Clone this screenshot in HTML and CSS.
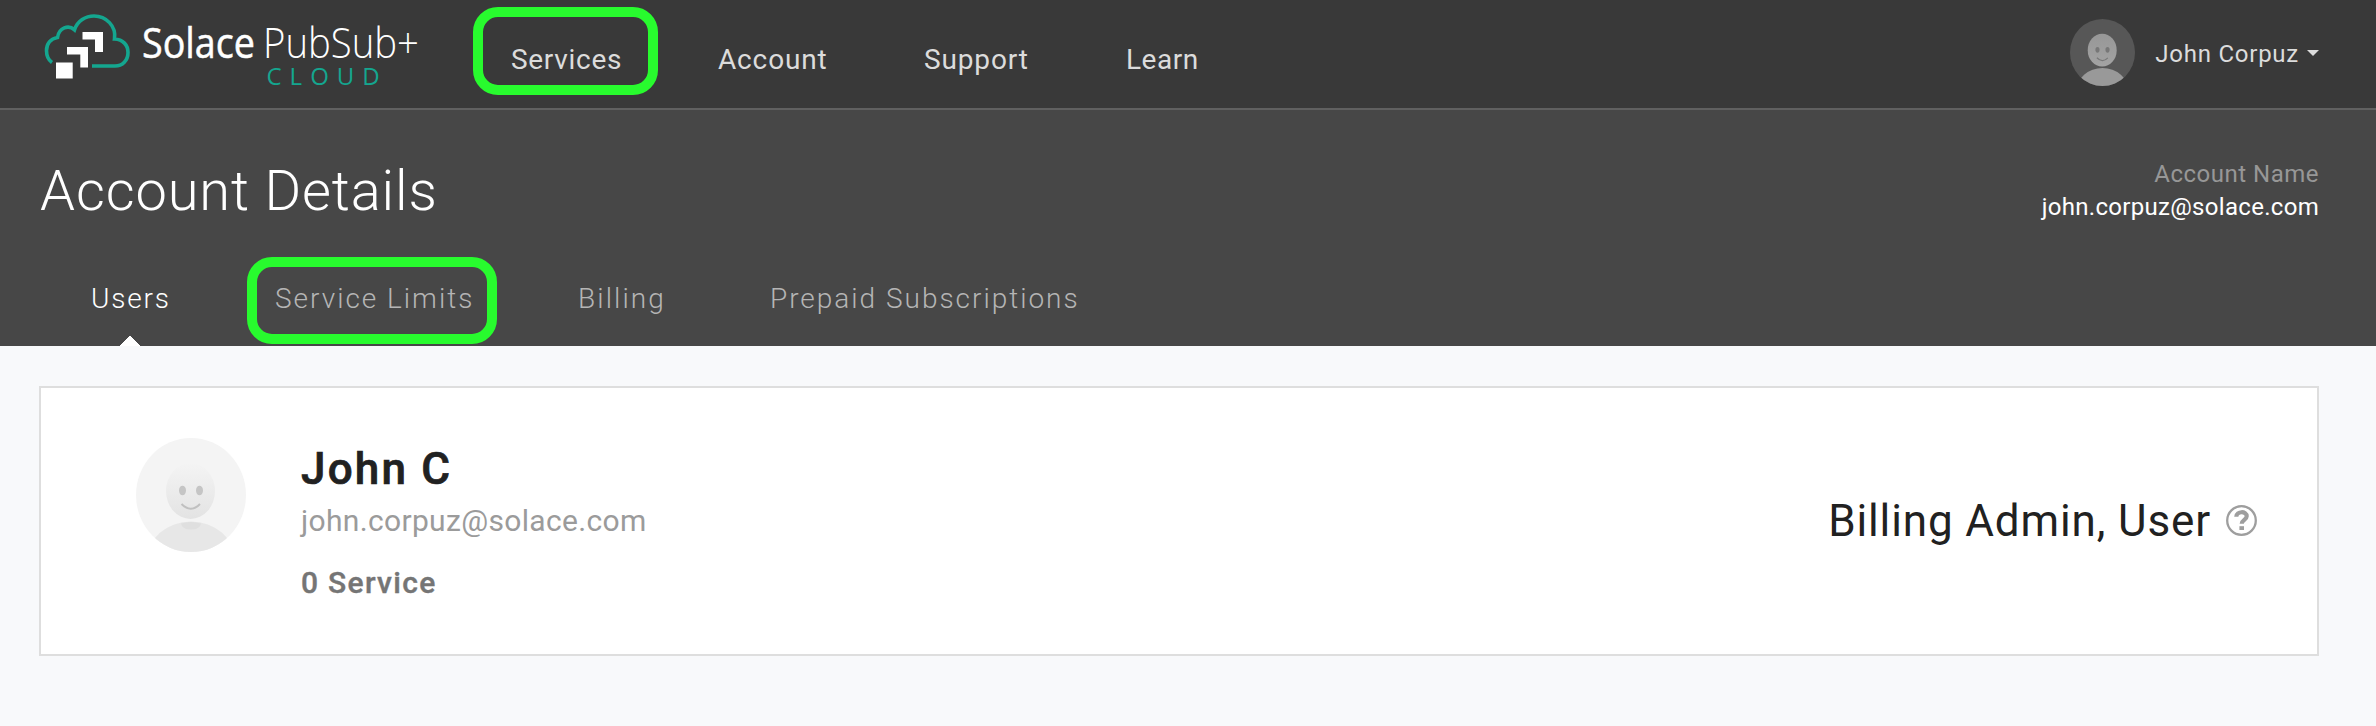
FILE: index.html
```html
<!DOCTYPE html>
<html lang="en">
<head>
<meta charset="utf-8">
<title>Account Details</title>
<link rel="stylesheet" href="styles.css">
</head>
<body>
<header class="topbar">
  <svg class="logo" width="400" height="108" viewBox="0 0 400 108">
    <path class="cloud" d="M22 62.5C17 59 16.500 54 16.500 50.500C16.500 44 20.500 38.500 27.500 37.500C29 27.500 38.500 24.500 44.500 29.800C47.500 21 55.500 16 64 16C76 16 86.500 26 84.500 39C93 39.500 98 45 98 52.500C98 60.500 92.500 66 85 66H62"/>
    <path class="blocks" d="M26 62.500H42.700V78.500H26ZM37 47H58V67.500H50.300V54.500H37ZM52.500 32H73V52H65V39.500H52.500Z"/>
    <text class="logo-solace" x="112" y="58" textLength="113" lengthAdjust="spacingAndGlyphs">Solace</text>
    <text class="logo-pubsub" x="233" y="58" textLength="156" lengthAdjust="spacingAndGlyphs">PubSub+</text>
    <text class="logo-cloud" x="236.500" y="84.500">CLOUD</text>
  </svg>
  <nav class="main-nav">
    <a class="nav-item marked">Services</a>
    <a class="nav-item account">Account</a>
    <a class="nav-item support">Support</a>
    <a class="nav-item learn">Learn</a>
  </nav>
  <div class="profile">
    <svg class="profile-avatar" viewBox="0 0 110 114" preserveAspectRatio="none">
      <defs>
        <clipPath id="disc"><ellipse cx="55" cy="57" rx="55" ry="57"/></clipPath>
        <linearGradient id="faceDark" x1="0" y1="0" x2="0" y2="1"><stop offset="0" stop-color="#979797"/><stop offset="1" stop-color="#a3a3a3"/></linearGradient>
        <linearGradient id="faceLight" x1="0" y1="0" x2="0" y2="1"><stop offset="0" stop-color="#f4f4f4"/><stop offset="1" stop-color="#e3e3e3"/></linearGradient>
      </defs>
      <ellipse cx="55" cy="57" rx="55" ry="57" fill="#575757"/>
      <ellipse cx="54.500" cy="53" rx="24.500" ry="28" fill="url(#faceDark)"/>
      <g clip-path="url(#disc)"><ellipse cx="55" cy="122" rx="44" ry="38.500" fill="#999"/></g>
      <ellipse cx="46.500" cy="52.500" rx="3.500" ry="4.800" fill="#777"/><ellipse cx="63.500" cy="52.500" rx="3.500" ry="4.800" fill="#777"/>
      <path d="M45.500 66Q55 75.500 64 66" fill="none" stroke="#777" stroke-width="2"/>
    </svg>
    <span class="profile-name">John Corpuz</span>
    <svg class="caret" width="12" height="6" viewBox="0 0 12 6"><path d="M0 0H12L6 6Z"/></svg>
  </div>
</header>
<section class="subheader">
  <div class="title-row">
    <h1>Account Details</h1>
    <div class="account-name">
      <div class="label">Account Name</div>
      <div class="value">john.corpuz@solace.com</div>
    </div>
  </div>
  <nav class="tabs">
    <a class="tab users">Users</a>
    <a class="tab limits">Service Limits</a>
    <a class="tab billing">Billing</a>
    <a class="tab prepaid">Prepaid Subscriptions</a>
  </nav>
</section>
<main>
  <article class="card">
    <svg class="avatar" width="110" height="114" viewBox="0 0 110 114">
      <ellipse cx="55" cy="57" rx="55" ry="57" fill="#f4f4f4"/>
      <ellipse cx="54.500" cy="53" rx="24.500" ry="28" fill="url(#faceLight)"/>
      <g clip-path="url(#disc)"><ellipse cx="55" cy="122" rx="44" ry="38.500" fill="#e7e7e7"/></g>
      <path d="M45 85.500Q55 82.500 65 85.500Q64 91.500 55 91.500Q46 91.500 45 85.500Z" fill="#dfdfdf"/>
      <ellipse cx="46.500" cy="52.500" rx="3.500" ry="4.800" fill="#c5c5c5"/><ellipse cx="63.500" cy="52.500" rx="3.500" ry="4.800" fill="#c5c5c5"/>
      <path d="M45.500 66Q55 75.500 64 66" fill="none" stroke="#c0c0c0" stroke-width="2"/>
    </svg>
    <div class="info">
      <div class="name">John C</div>
      <div class="email">john.corpuz@solace.com</div>
      <div class="services">0 Service</div>
    </div>
    <div class="role">Billing Admin, User
      <svg class="help" width="31" height="31" viewBox="0 0 31 31"><circle cx="15.500" cy="15.500" r="14.300"/><path class="hook" d="M10.300 11.700C10.500 5.800 20.700 5.800 20.700 11.300C20.700 14.800 15.700 15 15.700 18.800"/><path class="dot" d="M13.400 21.200H18V25H13.400Z"/></svg>
    </div>
  </article>
</main>
</body>
</html>
```
FILE: styles.css
```css
* { box-sizing: border-box; }
body {
  margin: 0;
  width: 2376px;
  height: 726px;
  overflow: hidden;
  background: #f8f9fb;
  font-family: Roboto, "Liberation Sans", sans-serif;
  white-space: nowrap;
}
.topbar {
  display: flex;
  height: 110px;
  padding: 0 57px 0 30px;
  background: #393939;
  border-bottom: 2px solid #606060;
  color: #dcdcdc;
}
.logo { flex: none; overflow: visible; }
.cloud { fill: none; stroke: #14a68f; stroke-width: 3.6; }
.blocks { fill: #fff; }
.logo text { font-family: "Open Sans", sans-serif; }
.logo-solace { font-size: 42px; font-weight: 400; fill: #fff; stroke: #fff; stroke-width: .5px; }
.logo-pubsub { font-size: 42px; font-weight: 300; fill: #fff; }
.logo-cloud { font-size: 24px; fill: #14a68f; letter-spacing: 8px; }
.main-nav { display: flex; font-size: 28px; line-height: 32px; letter-spacing: .85px; }
.nav-item { padding-top: 44px; }
.nav-item.marked {
  width: 185px;
  height: 88px;
  margin: 7px 0 0 43px;
  padding: 27px 0 0 28px;
  border: 10px solid #28fb2e;
  border-radius: 25px;
  letter-spacing: .7px;
}
.nav-item.account { margin-left: 60px; width: 206px; }
.nav-item.support { width: 202px; }
.nav-item.learn { letter-spacing: .5px; }
.profile { display: flex; margin-left: auto; }
.profile-avatar { width: 65px; height: 67px; margin: 19px 20px 0 0; }
.profile-name { font-size: 24px; line-height: 28px; margin-top: 40px; letter-spacing: .75px; }
.caret { margin: 50px 0 0 8px; fill: #dcdcdc; }
.subheader { height: 236px; background: #474747; color: #fff; }
.title-row { display: flex; justify-content: space-between; padding: 0 57px 0 40px; height: 147px; }
h1 { margin: 48px 0 0; font-size: 56px; font-weight: 300; line-height: 66px; letter-spacing: .88px; }
.account-name { padding-top: 48px; text-align: right; font-size: 24px; line-height: 33px; }
.label { color: #979797; letter-spacing: .5px; }
.value { letter-spacing: .3px; }
.tabs { display: flex; height: 89px; font-size: 28px; font-weight: 300; line-height: 32px; letter-spacing: 1.98px; color: #b5b5b5; }
.tab { padding-top: 26px; }
.users {
  width: 156px;
  margin-left: 91px;
  color: #fff;
  letter-spacing: 1.8px;
  background: conic-gradient(from 135deg at 50% 0, #fff 90deg, transparent 0) 29px 79px / 20px 10px no-repeat;
}
.limits {
  width: 250px;
  height: 87px;
  padding: 16px 0 0 18px;
  border: 10px solid #28fb2e;
  border-radius: 25px;
}
.billing { margin-left: 81px; width: 192px; letter-spacing: 2.1px; }
main { padding: 40px 57px 0 39px; }
.card {
  display: flex;
  height: 270px;
  padding: 50px 60px 0 95px;
  background: #fff;
  border: 2px solid #dedede;
}
.info { margin-left: 55px; }
.name { margin-top: 5px; font-size: 44px; font-weight: 500; line-height: 52px; letter-spacing: 2.2px; color: #212121; -webkit-text-stroke: .7px #212121; }
.email { margin-top: 8px; font-size: 30px; line-height: 36px; letter-spacing: .33px; color: #9b9b9b; }
.services { margin-top: 26px; font-size: 30px; font-weight: 500; line-height: 36px; letter-spacing: 1.3px; color: #757575; -webkit-text-stroke: .4px #757575; }
.role { display: flex; margin: 57px 0 0 auto; font-size: 44px; line-height: 52px; letter-spacing: .87px; color: #212121; }
.help { margin: 10px 0 0 15px; fill: none; stroke: #9e9e9e; stroke-width: 2.3; }
.help .hook { stroke-width: 4.200; }
.help .dot { fill: #9e9e9e; stroke: none; }
```
